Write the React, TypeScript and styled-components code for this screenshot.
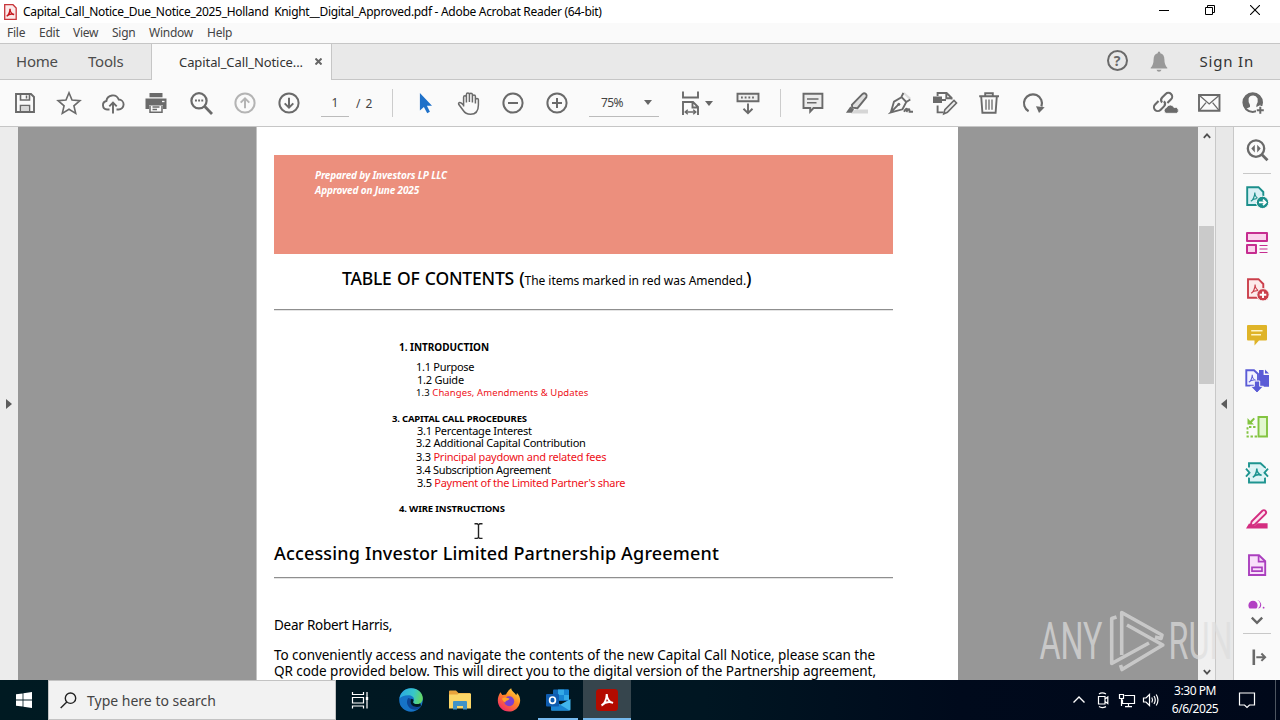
import React, { ReactNode } from 'react';
import styled, { createGlobalStyle, css } from 'styled-components';

const GlobalStyle = createGlobalStyle`
  * {
    box-sizing: border-box;
  }

  body {
    margin: 0;
    overflow: hidden;
    font-family: 'Noto Sans', 'Open Sans', sans-serif;
    color: #000000;
  }

  svg {
    display: block;
    flex: none;
  }
`;

// ---------------------------------------------
// icons
// ---------------------------------------------
const Glyph = styled.svg.attrs({ viewBox: '0 0 28 28' })<{
  $color?: string;
  $stroke?: number;
}>`
  width: 28px;
  height: 28px;
  fill: none;
  stroke: ${({ $color = '#6a6a6a' }) => $color};
  stroke-width: ${({ $stroke = 1.9 }) => $stroke};
  color: ${({ $color = '#6a6a6a' }) => $color};
`;

const acrobatMark =
  'M-4.2 4.2C-2.2 3.6 -.2 -.6 -.2 -4.6C-.2 -1.6 1.6 1.8 4.6 2.2C2 1.2 -1.6 1.8 -4.2 4.2';

const SaveIcon = () => (
  <Glyph>
    <path d="M5 5H20L23 8V23H5Z" />
    <path d="M9.5 5V11H18.5V5M9.5 23V16.5H18.5V23" strokeWidth="1.6" />
    <path d="M10.3 17.3H17.7V22H10.3Z" fill="#d8d8d8" stroke="none" />
    <path d="M15.5 6.5V9.5" strokeWidth="1.5" />
  </Glyph>
);

const StarIcon = () => (
  <Glyph $stroke={1.6}>
    <path d="M14 3.8L17 11.1L24.9 11.7L18.9 16.8L20.7 24.4L14 20.3L7.3 24.4L9.1 16.8L3.1 11.7L11 11.1Z" />
  </Glyph>
);

const CloudIcon = () => (
  <Glyph>
    <path d="M10.5 20.5H8A4.3 4.3 0 0 1 7.4 12A6.4 6.4 0 0 1 19.7 10.5A5 5 0 0 1 19.5 20.5H17.5" />
    <path d="M14 24.5V14M10.3 17.3L14 13.6L17.7 17.3" />
  </Glyph>
);

const PrintIcon = () => (
  <Glyph>
    <path d="M6.5 4H19.5V8.2H6.5ZM2.5 9.5H23.5V20H20V16.5H6V20H2.5Z" fill="currentColor" stroke="none" />
    <path d="M7 17V23.2H19V17M9.5 17.9H16.5M9.5 20.6H14" strokeWidth="1.5" />
    <path d="M19 12.5H21.5" stroke="#fafafa" strokeWidth="1.3" />
  </Glyph>
);

const SearchIcon = () => (
  <Glyph $stroke={2.2}>
    <circle cx="12" cy="11.8" r="7.6" />
    <path d="M17.8 17.6L25 25" strokeWidth="2.8" />
    <path d="M8 11.5H16.4" strokeDasharray="1.9 1.25" />
  </Glyph>
);

const PageArrowIcon = ({ up }: { up?: boolean }) => (
  <Glyph $color={up ? '#b4b4b4' : undefined} $stroke={2}>
    <circle cx="14" cy="14" r="9.6" />
    {up ? (
      <path d="M14 19.3V9.5M9.7 13.6L14 9.3L18.3 13.6" />
    ) : (
      <path d="M14 8.7V18.5M9.7 14.4L14 18.7L18.3 14.4" />
    )}
  </Glyph>
);

const PointerIcon = () => (
  <Glyph>
    <path d="M8.9 4V21.4L12.9 17.9L16.2 24.2L18.9 22.8L15.9 16.8H21Z" fill="#1f71c9" stroke="none" />
  </Glyph>
);

const HandIcon = () => (
  <Glyph $stroke={1.5}>
    <path d="M8.6 17.5V8.3Q8.6 6.7 10 6.7T11.4 8.3V13.5V5.6Q11.4 4 12.9 4T14.4 5.6V13V5.4Q14.4 4.2 15.9 4.2T17.4 5.8V13.5V7.3Q17.4 6 18.9 6T20.4 7.4V14.4V10.5Q20.6 9.4 22 9.4T23.4 10.8V16Q23.4 25.3 15.5 25.3Q10.6 25.3 7.9 21L3.7 15.3Q3.2 13.7 4.8 13.5Q6.2 13.3 8.6 16.3" />
  </Glyph>
);

const ZoomStepIcon = ({ plus }: { plus?: boolean }) => (
  <Glyph $stroke={2}>
    <circle cx="14" cy="14" r="9.6" />
    <path d={plus ? 'M9 14H19M14 9V19' : 'M9 14H19'} />
  </Glyph>
);

const FitIcon = () => (
  <Glyph>
    <path d="M6 2.5V8.5H21V2.5M6 26V13H16L21 18V26M15.5 13V18.5H21" />
    <path d="M8.5 23H18.5M10.8 20.8L8.2 23L10.8 25.2M16.2 20.8L18.8 23L16.2 25.2" strokeWidth="1.4" />
  </Glyph>
);

const ReadModeIcon = () => (
  <Glyph>
    <path d="M3.5 4.8H24.5V12.2H3.5Z" fill="#eeeeee" />
    <path d="M7 8.5H21.5" strokeDasharray="1.8 1.9" />
    <path d="M14 14.5V23.5M9.5 19.7L14 24.1L18.5 19.7" />
  </Glyph>
);

const CommentIcon = () => (
  <Glyph>
    <path d="M4.5 4.8H23.4V19H14.5L11.2 22.6V19H4.5Z" fill="#ececec" />
    <path d="M8 10H19.5M8 13.7H17.5" strokeWidth="1.4" />
  </Glyph>
);

const HighlightIcon = () => (
  <Glyph>
    <path d="M12 20.5H25V24.5H8Z" fill="#d6d6d6" stroke="none" />
    <path d="M19.6 4.9Q21.2 3.7 22.9 5Q24.4 6.5 23.4 8.2L14.5 19.2L9.3 18.6L8.9 15.9Z" fill="#dedede" strokeWidth="1.9" />
    <path d="M7.3 17.5L11 20.6L8.8 23.8H2.9Z" fill="currentColor" stroke="none" />
  </Glyph>
);

const SignIcon = () => (
  <Glyph $stroke={1.9}>
    <path d="M15.5 4L22.5 11L24 9L17.5 3.2Z" fill="#dddddd" stroke="none" />
    <path d="M3.8 23.4L7 12.6L14.6 8.2L19.3 13L15.5 20.3L3.8 23.4L11.3 15.7M14.2 8.4L16.4 4M19.3 13L23.3 10.5" />
    <circle cx="11.8" cy="15.2" r="1.5" fill="currentColor" stroke="none" />
    <path d="M17 22.7Q19.5 18.7 20 20.1T19.4 22.9Q22 19 22.3 20.5T22.6 22.7H26" />
  </Glyph>
);

const EditPageIcon = () => (
  <Glyph>
    <path d="M2 7.5H11V14H2Z" fill="currentColor" stroke="none" />
    <path d="M6.6 7V4H15.6L20.6 9V10.4M15.3 4V9.3H20.6M6.6 16.5V23.4H12.5M11 11H15" />
    <path d="M12.8 24.8L13.9 20.6L23 11.5L25.5 14L16.4 23.3Z" fill="#ececec" strokeWidth="1.6" />
  </Glyph>
);

const TrashIcon = () => (
  <Glyph>
    <path d="M4.2 7.2H24M10.2 7V4.3H17.8V7M6.2 7.5L7.4 23.7H20.6L21.8 7.5" />
    <path d="M11 10.5V20.8M14 10.5V20.8M17 10.5V20.8" strokeWidth="1.3" />
  </Glyph>
);

const RotateIcon = () => (
  <Glyph $stroke={2.2}>
    <path d="M9.6 22.2A9 9 0 1 1 22.4 17.5" />
    <path d="M17 17.3L25.7 18.2L20 24Z" fill="currentColor" stroke="none" />
  </Glyph>
);

const LinkIcon = () => (
  <Glyph $stroke={2.1}>
    <g transform="rotate(-45 12 13)">
      <path d="M9.5 9.2H4.6A3.8 3.8 0 0 0 4.6 16.8H9.6A3.8 3.8 0 0 0 13.2 13.2" />
      <path d="M14.4 16.8H19.6A3.8 3.8 0 0 0 19.6 9.2H14.6A3.8 3.8 0 0 0 11 12.7" />
    </g>
    <path d="M15 24.3A3 3 0 0 1 15.5 18.6A4 4 0 0 1 23 18.6A3 3 0 0 1 25.5 24.3Z" fill="currentColor" stroke="#fafafa" strokeWidth="0.8" />
  </Glyph>
);

const MailIcon = () => (
  <Glyph>
    <path d="M4 6H24.5V21.8H4Z" />
    <path d="M4.5 6.5L14.2 15L24 6.5M4.5 21.3L11 13.6M24 21.3L17.6 13.6" strokeWidth="1.3" />
  </Glyph>
);

const UserIcon = () => (
  <Glyph>
    <circle cx="13.7" cy="13.6" r="9.3" strokeWidth="2" />
    <path d="M4.7 17C3 7 10 4 14 4.2C20 4.5 24 9 23 15L17.4 18.3V16Q19.4 13 18.6 9.4Q17 6.4 14 6.6Q10.6 6.6 9.6 9.6Q9 13.3 11 16V18L6.5 20Z" fill="currentColor" stroke="none" />
    <path d="M17 21.3H25.6M21.3 17V25.6" stroke="#fafafa" strokeWidth="5" />
    <path d="M17.8 21.3H24.8M21.3 17.8V24.8" strokeWidth="2" />
  </Glyph>
);

const HelpMark = styled.span`
  display: flex;
  align-items: center;
  justify-content: center;
  width: 21px;
  height: 21px;
  border: 2px solid #6a6a6a;
  border-radius: 50%;
  color: #6a6a6a;
  font-size: 14px;
  font-weight: 700;
  line-height: 17px;
`;

const BellIcon = () => (
  <Glyph $color="#999999">
    <path d="M14 3.6Q15.4 3.6 15.3 5.2Q19.4 6.3 19.4 11.5Q19.4 17 22.3 19.7V20.6H5.7V19.7Q8.6 17 8.6 11.5Q8.6 6.3 12.7 5.2Q12.6 3.6 14 3.6ZM11.5 21.8H16.5Q16 23.7 14 23.7T11.5 21.8Z" fill="currentColor" stroke="none" />
  </Glyph>
);

const FindToolIcon = () => (
  <Glyph $stroke={2.3}>
    <circle cx="13" cy="12.6" r="8.2" />
    <path d="M18.8 18.6L24.5 24.2" strokeWidth="2.8" />
    <path d="M11.8 8.8V16.4L8.3 12.6ZM14.2 8.8V16.4L17.7 12.6Z" fill="currentColor" stroke="none" />
  </Glyph>
);

const ExportIcon = () => (
  <Glyph $color="#1b8f8b">
    <path d="M4.2 4.2H15.5L20.3 9V22H4.2Z" fill="#d8f0f5" />
    <path d={acrobatMark} transform="translate(12 14)" strokeWidth="1.1" />
    <circle cx="19.5" cy="19.4" r="6.2" fill="currentColor" stroke="#fafafa" strokeWidth="1" />
    <path d="M16 19.4H22.5M20 16.6L22.8 19.4L20 22.2" stroke="#ffffff" strokeWidth="1.7" />
  </Glyph>
);

const OrganizeIcon = () => (
  <Glyph $color="#c62d90" $stroke={2}>
    <path d="M4 4H24V12H4ZM4 16H13V24H4Z" fill="#fbd3ec" strokeLinejoin="round" />
    <path d="M16.5 16.5H24.5M16.5 20H24.5M16.5 23.5H24.5" strokeWidth="1.2" />
  </Glyph>
);

const CreateIcon = () => (
  <Glyph $color="#cb3f4b">
    <path d="M5 4.2H15.5L20.3 9V22.8H5Z" fill="#fdeaea" />
    <path d={acrobatMark} transform="translate(12.3 14)" strokeWidth="1.1" />
    <circle cx="20" cy="19.8" r="6.2" fill="currentColor" stroke="#fafafa" strokeWidth="1" />
    <path d="M16.7 19.8H23.3M20 16.5V23.1" stroke="#ffffff" strokeWidth="1.9" />
  </Glyph>
);

const NoteIcon = () => (
  <Glyph $color="#dfb428">
    <path d="M5 4H23Q24 4 24 5V18.6Q24 19.6 23 19.6H16L11.5 24.4V19.6H5Q4 19.6 4 18.6V5Q4 4 5 4Z" fill="currentColor" stroke="none" />
    <path d="M8.2 9.8H19.5M8.2 13.7H18" stroke="#fff4c4" strokeWidth="1.6" />
  </Glyph>
);

const CombineIcon = () => (
  <Glyph $color="#5a5bd6">
    <path d="M12 18.6H3.3V3.3H11L15 7V14" fill="#f2f2ff" />
    <path d={acrobatMark} transform="translate(9.4 11.6) scale(.85)" strokeWidth="1.2" />
    <path d="M16 3H20.6V8H26V19.7H16ZM22 2.6L26 6.6H22Z" fill="currentColor" stroke="none" />
    <path d="M11.3 14V19.3H7.6L14 26L20.4 19.3H16.7V14Z" fill="currentColor" stroke="#fafafa" strokeWidth="1" />
  </Glyph>
);

const CompareIcon = () => (
  <Glyph $color="#83c441">
    <path d="M15.5 4H24V23.5H15.5Z" fill="#e2f7cf" />
    <path d="M12.5 14H4.5V23.5H14" strokeDasharray="2.4 1.7" />
    <path d="M4.5 5V11.5H11L8.8 9.5L12 6L10.6 4.7L7.2 7.9Z" fill="currentColor" stroke="none" />
  </Glyph>
);

const CompressIcon = () => (
  <Glyph $color="#1e9490">
    <path d="M6 8.4V4.2H17.5L22 8.4V9.5M6 18.5V23.5H22V18.5" fill="#dcf3f5" />
    <path d="M6 9H22V18.5H6Z" fill="#dcf3f5" stroke="none" />
    <path d="M3 9.7L6.5 13.7L3 17.7M25 9.7L21.5 13.7L25 17.7" />
    <path d={acrobatMark} transform="translate(14 14)" strokeWidth="1.5" />
  </Glyph>
);

const RedactIcon = () => (
  <Glyph $color="#d42d80">
    <path d="M3 23.6L6 18.6L12 20.5L14.5 18.2H24.6V23.6Z" fill="currentColor" stroke="none" />
    <path d="M7.6 20.6L8.6 16.6L19.6 5.6Q21 4.6 22.4 5.8Q23.8 7.2 22.6 8.8L11.6 19.7Z" fill="#fde4f0" />
  </Glyph>
);

const FormIcon = () => (
  <Glyph $color="#aa3fbe">
    <path d="M6 4.2H16L22.2 10.2V24H6Z" fill="#f8e0fa" />
    <path d="M15.6 4.5V10.6H22M9 16.3H19V20.2H9Z" strokeWidth="1.7" />
  </Glyph>
);

const ShareIcon = () => (
  <svg width="20" height="10" viewBox="0 0 20 10">
    <path d="M2.6 9.5A4.6 4.6 0 1 1 9.4 9.5ZM9.5 .9A4.6 4.6 0 0 1 10.8 9.4L13 9.1A5 5 0 0 0 9.5 .9Z" fill="#b23fc3" />
    <circle cx="16.6" cy="8.7" r="0.9" fill="#b23fc3" />
  </svg>
);

const ChevronDown = () => (
  <svg width="14" height="9" viewBox="0 0 14 9" fill="none" stroke="#666666" strokeWidth="2.3">
    <path d="M1.8 1.6L7 6.8L12.2 1.6" />
  </svg>
);

const CollapseIcon = () => (
  <Glyph $stroke={2.6}>
    <path d="M10.8 6.5V22" />
    <path d="M13.3 14.2H21.8M18.4 10.5L22.1 14.2L18.4 17.9" strokeWidth="2" />
  </Glyph>
);

// ---------------------------------------------
// window chrome
// ---------------------------------------------
const Screen = styled.div`
  position: relative;
  display: flex;
  flex-direction: column;
  width: 1280px;
  height: 720px;
  overflow: hidden;
`;

const TitleBar = styled.header`
  display: flex;
  align-items: center;
  height: 23px;
  padding: 0 2px 0 4px;
  background: #ffffff;

  h1 {
    flex: 1;
    margin: 0 0 0 4px;
    font-size: 12px;
    font-weight: 400;
    letter-spacing: -0.3px;
    white-space: pre;
  }
`;

const WindowButton = styled.span`
  display: flex;
  justify-content: center;
  width: 45.5px;
  padding-bottom: 3px;
`;

const MenuBar = styled.nav`
  display: flex;
  gap: 14px;
  height: 20px;
  padding: 1px 7px 0;
  background: #fafafa;
  font-size: 12px;
  line-height: 18px;
  color: #444444;
`;

const MenuItem = styled.span<{ $width: number }>`
  width: ${({ $width }) => $width}px;
  letter-spacing: -0.25px;
  white-space: nowrap;
`;

const TabBar = styled.div`
  display: flex;
  align-items: center;
  height: 37px;
  background: #e9e9e9;
  border-top: 1px solid #c6c6c6;
  border-bottom: 1px solid #c6c6c6;
  color: #4c4c4c;
  font-size: 15px;
`;

const TabLink = styled.span<{ $width: number }>`
  width: ${({ $width }) => $width}px;
  padding: 0 0 2px 16px;
  letter-spacing: -0.2px;
`;

const ActiveTab = styled.div`
  display: flex;
  align-items: center;
  width: 181px;
  height: 37px;
  margin-bottom: -2px;
  padding: 0 9px 2px 27px;
  justify-content: space-between;
  background: #fafafa;
  border-left: 1px solid #c6c6c6;
  border-right: 1px solid #c6c6c6;
  color: #333333;
  font-size: 13px;
  letter-spacing: -0.08px;
`;

const Account = styled.div`
  display: flex;
  align-items: center;
  margin-left: auto;
  padding: 0 26px 2px 0;
  color: #333333;

  svg {
    margin: 2px 27px 0 17px;
  }

  b {
    font-weight: 400;
    letter-spacing: 0.8px;
  }
`;

const Toolbar = styled.div`
  display: flex;
  align-items: center;
  height: 47px;
  padding: 0 5px 0 3px;
  background: #fafafa;
  border-bottom: 1px solid #c6c6c6;
  font-size: 12px;
  color: #444444;
`;

const Tool = styled.span`
  display: flex;
  justify-content: center;
  flex: none;
  width: 44px;
`;

const Divider = styled.i<{ $before?: number; $after: number }>`
  flex: none;
  width: 1px;
  height: 28px;
  margin: 0 ${({ $after }) => $after}px 0 ${({ $before = 0 }) => $before}px;
  background: #cccccc;
`;

const PageField = styled.span`
  display: flex;
  align-items: center;
  justify-content: center;
  width: 28px;
  height: 27px;
  border-bottom: 1px solid #bbbbbb;
`;

const ZoomField = styled.div`
  display: flex;
  align-items: center;
  justify-content: space-between;
  flex: none;
  width: 70px;
  height: 27px;
  margin-left: 10px;
  padding: 0 7px 0 12px;
  border-bottom: 1px solid #bbbbbb;
  letter-spacing: -0.6px;
`;

const PageInput = styled.div`
  display: flex;
  align-items: center;
  gap: 7px;
  width: 71px;
  margin-left: 10px;
  word-spacing: 2px;
  white-space: nowrap;
`;

const Caret = styled.i`
  width: 0;
  height: 0;
  border: 4px solid transparent;
  border-top: 5px solid #666666;
  border-bottom: 0;
`;

const FitTool = styled.div`
  display: flex;
  align-items: center;
  width: 45px;
  margin: 0 4px 0 18px;
`;

const RightTools = styled.div`
  display: flex;
  margin-left: auto;
`;

// ---------------------------------------------
// document view
// ---------------------------------------------
const Workspace = styled.main`
  display: flex;
  height: 553px;
`;

const Strip = styled.div<{ $right?: boolean }>`
  display: flex;
  align-items: center;
  justify-content: center;
  width: 18px;
  background: #ececec;

  ${({ $right }) =>
    $right &&
    css`
      width: 19px;
      padding-right: 2px;
      border-left: 1px solid #c8c8c8;
      border-right: 1px solid #c8c8c8;
      background: #e8e8e8;
    `}
`;

const SideArrow = styled.i<{ $left?: boolean }>`
  width: 0;
  height: 0;
  border: 5px solid transparent;
  border-${({ $left }) => ($left ? 'right' : 'left')}: 6px solid #5c5c5c;
  border-${({ $left }) => ($left ? 'left' : 'right')}: 0;
`;

const Canvas = styled.div`
  flex: 1;
  padding-left: 238px;
  background: #979797;
`;

const Page = styled.article`
  width: 702px;
  height: 553px;
  overflow: hidden;
  padding: 28px 65px 0 17px;
  background: #ffffff;
  border-left: 1px solid #c4c4c4;
`;

const Banner = styled.div`
  height: 99px;
  padding: 13px 41px;
  background: #ec8f7d;
  color: #ffffff;
  font-size: 10px;
  font-weight: 700;
  font-style: italic;
  line-height: 15px;
  letter-spacing: -0.15px;
`;

const ContentsTitle = styled.h2`
  height: 55px;
  margin: 0;
  padding: 11px 0 0 68px;
  font-size: 17.5px;
  font-weight: 500;
  line-height: 26px;
  letter-spacing: -0.2px;
  word-spacing: 1px;
  white-space: nowrap;

  small {
    font-size: 12px;
    font-weight: 400;
    letter-spacing: -0.05px;
    word-spacing: 0;
  }
`;

const Rule = styled.div`
  height: 2px;
  border-top: 1px solid #8f8f8f;
  background: #e4e4e4;
`;

const Contents = styled.div`
  height: 231px;
  padding-top: 30px;
`;

const Entry = styled.div<{
  $indent: number;
  $height?: number;
  $spacing?: number;
  $heading?: boolean;
  $size?: number;
}>`
  height: ${({ $height = 13 }) => $height}px;
  padding-left: ${({ $indent }) => $indent}px;
  font-size: ${({ $size = 11 }) => $size}px;
  font-weight: ${({ $heading }) => ($heading ? 700 : 400)};
  line-height: 12px;
  letter-spacing: ${({ $spacing = -0.24 }) => $spacing}px;
  white-space: nowrap;

  em {
    color: #ee1018;
    font-style: normal;
  }
`;

const SectionTitle = styled.h2`
  height: 35px;
  margin: 0;
  font-size: 18px;
  font-weight: 500;
  line-height: 22px;
  letter-spacing: 0.16px;
  white-space: nowrap;
`;

const Letter = styled.div`
  padding-top: 38px;
  font-size: 13.5px;
  line-height: 16px;
  letter-spacing: -0.05px;
  white-space: nowrap;

  p {
    margin: 0 0 14px;
  }

  p:first-child {
    letter-spacing: -0.25px;
  }
`;

const Scrollbar = styled.div`
  display: flex;
  flex-direction: column;
  align-items: center;
  justify-content: space-between;
  width: 17px;
  padding: 5px 0 4px;
  background: #f0f0f0;
`;

const Thumb = styled.div`
  width: 15px;
  height: 158px;
  margin-bottom: 198px;
  background: #cacaca;
`;

const ToolPane = styled.aside`
  display: flex;
  flex-direction: column;
  align-items: center;
  width: 46px;
  background: #fafafa;
`;

const PaneItem = styled.span`
  display: flex;
  align-items: center;
  height: 46px;
`;

const PaneRule = styled.i`
  width: 28px;
  height: 1px;
  background: #c8c8c8;
`;

const MorePane = styled.div`
  display: flex;
  flex-direction: column;
  align-items: center;
  gap: 7px;
  height: 45px;
  padding-top: 11px;
`;

const Watermark = styled.svg`
  position: absolute;
  left: 1036px;
  top: 604px;
  fill: #dedede;
  opacity: 0.7;
  font-family: 'Roboto', sans-serif;
  font-size: 51px;
  font-weight: 400;
`;

const TextCursor = styled.svg`
  position: absolute;
  left: 474px;
  top: 523px;
`;

// ---------------------------------------------
// taskbar
// ---------------------------------------------
const Taskbar = styled.footer`
  display: flex;
  height: 40px;
  background: linear-gradient(90deg, #001a22 0%, #001622 55%, #000a1c 75%, #00081a 100%);
  color: #ffffff;
`;

const TaskButton = styled.span<{ $width: number; $active?: boolean; $open?: boolean }>`
  display: flex;
  align-items: center;
  justify-content: center;
  width: ${({ $width }) => $width}px;
  margin: ${({ $open }) => ($open ? '0 5px 0 4px' : '0')};
  background: ${({ $active }) => ($active ? '#36454d' : 'transparent')};
  box-shadow: ${({ $active, $open }) => ($active || $open ? 'inset 0 -2px #76b9ed' : 'none')};
`;

const SearchBox = styled.div`
  display: flex;
  align-items: center;
  gap: 10px;
  width: 288px;
  padding: 0 11px;
  background: #f2f2f2;
  border: 1px solid #c3c3c3;
  color: #444444;
  font-size: 14px;
`;

const Tray = styled.div`
  display: flex;
  align-items: center;
  margin-left: auto;
`;

const TrayIcon = styled.svg.attrs({ viewBox: '0 0 24 24' })`
  width: 24px;
  height: 24px;
  fill: none;
  stroke: #ffffff;
  stroke-width: 1.2;
`;

const Clock = styled.div`
  width: 64px;
  margin-right: 8px;
  font-size: 12px;
  line-height: 18px;
  letter-spacing: -0.45px;
  text-align: center;
`;

const PeekEdge = styled.i`
  width: 5px;
  height: 40px;
  margin-left: 16px;
  border-left: 1px solid #4d5560;
`;

const menu: [string, number][] = [
  ['File', 18],
  ['Edit', 20],
  ['View', 25],
  ['Sign', 23],
  ['Window', 44],
  ['Help', 24],
];

function ToolGroup({ children }: { children: ReactNode }) {
  return (
    <>
      {React.Children.map(children, (icon) => (
        <Tool>{icon}</Tool>
      ))}
    </>
  );
}

function WindowHeader() {
  return (
    <>
      <TitleBar>
        <svg width="15" height="16" viewBox="0 0 15 16">
          <path d="M.7 .7H9L12.2 4V15.3H.7Z" fill="#fbeaea" stroke="#c7353a" strokeWidth="1.3" />
          <path d={acrobatMark} transform="translate(6.2 8.6) scale(.85)" fill="none" stroke="#c4161c" strokeWidth="1.7" />
        </svg>
        <h1>
          Capital_Call_Notice_Due_Notice_2025_Holland{'  '}Knight__Digital_Approved.pdf - Adobe Acrobat Reader (64-bit)
        </h1>
        <WindowButton>
          <svg width="10" height="10" viewBox="0 0 10 10">
            <path d="M0 5.5H10" stroke="#000" />
          </svg>
        </WindowButton>
        <WindowButton>
          <svg width="10" height="10" viewBox="0 0 10 10" fill="none" stroke="#000">
            <path d="M.5 2.5H7.5V9.5H.5ZM2.5 2.5V.5H9.5V7.5H7.5" />
          </svg>
        </WindowButton>
        <WindowButton>
          <svg width="10" height="10" viewBox="0 0 10 10" stroke="#000" strokeWidth="1.1">
            <path d="M0 0L10 10M10 0L0 10" />
          </svg>
        </WindowButton>
      </TitleBar>

      <MenuBar>
        {menu.map(([label, width]) => (
          <MenuItem key={label} $width={width}>
            {label}
          </MenuItem>
        ))}
      </MenuBar>

      <TabBar>
        <TabLink $width={72}>Home</TabLink>
        <TabLink $width={79}>Tools</TabLink>
        <ActiveTab>
          Capital_Call_Notice...
          <svg width="7" height="7" viewBox="0 0 7 7" stroke="#666" strokeWidth="2">
            <path d="M.5 .5L6.5 6.5M6.5 .5L.5 6.5" />
          </svg>
        </ActiveTab>
        <Account>
          <HelpMark>?</HelpMark>
          <BellIcon />
          <b>Sign In</b>
        </Account>
      </TabBar>

      <Toolbar>
        <ToolGroup>
          <SaveIcon />
          <StarIcon />
          <CloudIcon />
          <PrintIcon />
          <SearchIcon />
          <PageArrowIcon up />
          <PageArrowIcon />
        </ToolGroup>
        <PageInput>
          <PageField>1</PageField>
          <span>/ 2</span>
        </PageInput>
        <Divider $after={10} />
        <ToolGroup>
          <PointerIcon />
          <HandIcon />
          <ZoomStepIcon />
          <ZoomStepIcon plus />
        </ToolGroup>
        <ZoomField>
          75%
          <Caret />
        </ZoomField>
        <FitTool>
          <FitIcon />
          <Caret />
        </FitTool>
        <Tool>
          <ReadModeIcon />
        </Tool>
        <Divider $before={10} $after={10} />
        <ToolGroup>
          <CommentIcon />
          <HighlightIcon />
          <SignIcon />
          <EditPageIcon />
          <TrashIcon />
          <RotateIcon />
        </ToolGroup>
        <RightTools>
          <ToolGroup>
            <LinkIcon />
            <MailIcon />
            <UserIcon />
          </ToolGroup>
        </RightTools>
      </Toolbar>
    </>
  );
}

function DocumentPage() {
  return (
    <Page>
      <Banner>
        Prepared by Investors LP LLC
        <br />
        Approved on June 2025
      </Banner>
      <ContentsTitle>
        TABLE OF CONTENTS (<small>The items marked in red was Amended.</small>)
      </ContentsTitle>
      <Rule />
      <Contents>
        <Entry $indent={125} $height={20} $heading $size={10} $spacing={-0.02}>
          1. INTRODUCTION
        </Entry>
        <Entry $indent={142} $spacing={-0.28}>1.1 Purpose</Entry>
        <Entry $indent={143}>1.2 Guide</Entry>
        <Entry $indent={142} $height={26} $size={9.5} $spacing={0.1}>
          1.3 <em>Changes, Amendments &amp; Updates</em>
        </Entry>
        <Entry $indent={118} $height={12} $heading $size={9.5} $spacing={-0.19}>
          3. CAPITAL CALL PROCEDURES
        </Entry>
        <Entry $indent={143} $height={12}>3.1 Percentage Interest</Entry>
        <Entry $indent={142} $height={14}>3.2 Additional Capital Contribution</Entry>
        <Entry $indent={142}>
          3.3 <em>Principal paydown and related fees</em>
        </Entry>
        <Entry $indent={142} $spacing={-0.34}>3.4 Subscription Agreement</Entry>
        <Entry $indent={143} $height={26} $spacing={-0.28}>
          3.5 <em>Payment of the Limited Partner's share</em>
        </Entry>
        <Entry $indent={125} $heading $size={9.5} $spacing={-0.15}>
          4. WIRE INSTRUCTIONS
        </Entry>
      </Contents>
      <SectionTitle>Accessing Investor Limited Partnership Agreement</SectionTitle>
      <Rule />
      <Letter>
        <p>Dear Robert Harris,</p>
        <p>
          To conveniently access and navigate the contents of the new Capital Call Notice, please scan the
          <br />
          QR code provided below. This will direct you to the digital version of the Partnership agreement,
        </p>
      </Letter>
    </Page>
  );
}

function SidePane() {
  return (
    <ToolPane>
      <PaneItem>
        <FindToolIcon />
      </PaneItem>
      <PaneRule />
      {[
        ExportIcon,
        OrganizeIcon,
        CreateIcon,
        NoteIcon,
        CombineIcon,
        CompareIcon,
        CompressIcon,
        RedactIcon,
        FormIcon,
      ].map((Icon, i) => (
        <PaneItem key={i}>
          <Icon />
        </PaneItem>
      ))}
      <MorePane>
        <ShareIcon />
        <ChevronDown />
      </MorePane>
      <PaneRule />
      <PaneItem>
        <CollapseIcon />
      </PaneItem>
    </ToolPane>
  );
}

function WindowsTaskbar() {
  return (
    <Taskbar>
      <TaskButton $width={48}>
        <svg width="16" height="16" viewBox="0 0 16 16" fill="#fff">
          <path d="M0 2.3L6.6 1.4V7.5H0ZM7.4 1.3L16 0V7.5H7.4ZM0 8.4H6.6V14.6L0 13.7ZM7.4 8.4H16V16L7.4 14.7Z" />
        </svg>
      </TaskButton>
      <SearchBox>
        <svg width="17" height="17" viewBox="0 0 17 17" fill="none" stroke="#222" strokeWidth="1.4">
          <circle cx="10.5" cy="6.2" r="5.2" />
          <path d="M6.8 9.9L.7 16" />
        </svg>
        Type here to search
      </SearchBox>
      <TaskButton $width={48}>
        <svg width="18" height="18" viewBox="0 0 18 18" fill="none" stroke="#fff" strokeWidth="1.2">
          <path d="M1.5 1V3.5H12.5V1M1.5 6.5H12.5V12H1.5ZM1.5 17.5V15H12.5V17.5M16 1V17.5" />
          <path d="M14.8 6H17.2V9H14.8Z" fill="#fff" stroke="none" />
        </svg>
      </TaskButton>
      <TaskButton $width={53}>
        <svg width="24" height="24" viewBox="0 0 24 24">
          <defs>
            <linearGradient id="edge" x1="0" y1="0.2" x2="1" y2="0.4">
              <stop offset="0" stopColor="#2aa7e2" />
              <stop offset="0.6" stopColor="#37c6c9" />
              <stop offset="1" stopColor="#64d763" />
            </linearGradient>
          </defs>
          <circle cx="12" cy="12" r="11.8" fill="#1673c7" />
          <path d="M.5 10.5C1.5 4 6.4 .2 12 .2C19 .2 23.8 5 23.8 10.2C23.8 14 21 16.3 17.8 16.3C15.6 16.3 14 15.4 14 14.3C14 13.5 15 13.2 15 11.4C15 9 12.6 7.2 9.4 7.2C5 7.2 1.8 8.6 .5 10.5Z" fill="url(#edge)" />
          <path d="M9.2 10C6.6 13.6 8.2 19.4 13.3 21.3C17 22.4 20.3 21 22 18.5C19.5 19.7 14.5 19.4 12.3 16.5C11 14.5 11.4 12 12.4 11Z" fill="#0c4595" />
          <path d="M12.4 10.8C15 11 14.7 12.7 14.1 14C14 16 18 16.8 21.4 15.2L22 18.2C18 19.8 13.3 18.7 12 16C11 13.8 11.6 12 12.4 10.8Z" fill="#001824" />
        </svg>
      </TaskButton>
      <TaskButton $width={46}>
        <svg width="22" height="20" viewBox="0 0 22 20">
          <path d="M0 1.5Q0 .5 1 .5H7L9.5 3H21V8H0Z" fill="#e8a33c" />
          <path d="M0 4.6H8.4L10 3.5H22V18.5H0Z" fill="#fbd667" />
          <path d="M4 19.5V12Q4 11 5 11H17Q18 11 18 12V19.5H14V16H8V19.5Z" fill="#3f93c7" />
        </svg>
      </TaskButton>
      <TaskButton $width={51}>
        <svg width="24" height="24" viewBox="0 0 24 24">
          <defs>
            <linearGradient id="fox" x1="0.9" y1="0" x2="0.2" y2="1">
              <stop offset="0" stopColor="#ffe14a" />
              <stop offset="0.45" stopColor="#ff8a22" />
              <stop offset="1" stopColor="#f0246d" />
            </linearGradient>
          </defs>
          <path d="M3.4 4.2L5.3 7L9 6.5C10.5 3.8 12.2 1.4 14.2 .2C14.5 3.2 17.5 4 19.3 7.2L20 5C22.8 8 23.5 11 23 14C22 19.8 17.6 23.6 12 23.6C5.6 23.6 .8 18.7 .8 12.6C.8 9.5 1.8 6.6 3.4 4.2Z" fill="url(#fox)" />
          <circle cx="12.2" cy="13.2" r="5" fill="#7b3fd0" />
          <path d="M5 10.5C7.5 8.6 10 9.4 12.8 10.8C11.2 12.8 9 12 8.2 14.5C6.5 13.6 5.2 12.3 5 10.5Z" fill="#ffa32a" />
        </svg>
      </TaskButton>
      <TaskButton $width={40} $open>
        <svg width="25" height="22" viewBox="0 0 25 22">
          <path d="M7 1.5Q7 .5 8 .5H22Q23 .5 23 1.5V12H7Z" fill="#1066b5" />
          <path d="M12 .5H18V6H12ZM18 6H23V11H18Z" fill="#32a9e7" />
          <path d="M18 .5H22Q23 .5 23 1.5V6H18ZM12 6H18V11H12Z" fill="#1684d3" />
          <path d="M5 10L14.5 15.5L24.5 10V20.5Q24.5 21.5 23.5 21.5H6Q5 21.5 5 20.5Z" fill="#41b5ee" />
          <path d="M5 10V20.5Q5 21.5 6 21.5H23.5Z" fill="#1a84d4" />
          <rect x="0" y="5" width="13" height="12.5" rx="1" fill="#0e5cb0" />
          <ellipse cx="6.5" cy="11.2" rx="2.9" ry="3.2" fill="none" stroke="#fff" strokeWidth="1.7" />
        </svg>
      </TaskButton>
      <TaskButton $width={48} $active>
        <svg width="22" height="22" viewBox="0 0 22 22">
          <rect width="22" height="22" rx="3.5" fill="#b30b00" />
          <path d={acrobatMark} transform="translate(11 11) scale(1.3)" fill="none" stroke="#fff" strokeWidth="1.5" />
        </svg>
      </TaskButton>
      <Tray>
        <TrayIcon>
          <path d="M6.5 14.5L12 9L17.5 14.5" strokeWidth="1.4" />
        </TrayIcon>
        <TrayIcon>
          <path d="M7.5 8.5H14V16H7.5ZM14 11L16.8 9V15.5L14 13.5M8 6Q11 3.8 15 6M8 18.6Q11 20.6 15 18.6" />
        </TrayIcon>
        <TrayIcon>
          <path d="M9.5 7.5H19.5V15.5H7.5V11.5M13.5 15.5V18.5M10 18.6H17M4.5 6.5H8.5V10.5H4.5ZM6.5 10.5V18" />
        </TrayIcon>
        <TrayIcon>
          <path d="M4.5 10H7L10.5 6.5V17.5L7 14H4.5ZM12.8 9.5Q14.3 12 12.8 14.5M15 8Q17.5 12 15 16M17.2 6.5Q20.7 12 17.2 17.5" />
        </TrayIcon>
        <Clock>
          3:30 PM
          <br />
          6/6/2025
        </Clock>
        <TrayIcon>
          <path d="M4.5 5H19.5V17H14.5L12 19.5L9.5 17H4.5Z" />
        </TrayIcon>
        <PeekEdge />
      </Tray>
    </Taskbar>
  );
}

export default function App() {
  return (
    <Screen>
      <GlobalStyle />
      <WindowHeader />
      <Workspace>
        <Strip>
          <SideArrow />
        </Strip>
        <Canvas>
          <DocumentPage />
        </Canvas>
        <Scrollbar>
          <svg width="8" height="8" viewBox="0 0 8 8" fill="none" stroke="#505050" strokeWidth="1.8">
            <path d="M.8 5.8L4 2.4L7.2 5.8" />
          </svg>
          <Thumb />
          <svg width="8" height="8" viewBox="0 0 8 8" fill="none" stroke="#505050" strokeWidth="1.8">
            <path d="M.8 2.2L4 5.6L7.2 2.2" />
          </svg>
        </Scrollbar>
        <Strip $right>
          <SideArrow $left />
        </Strip>
        <SidePane />
      </Workspace>
      <WindowsTaskbar />
      <TextCursor width="9" height="17" viewBox="0 0 9 17" fill="none" stroke="#222" strokeWidth="1.4">
        <path d="M.5 .8H3.2L4.5 1.8L5.8 .8H8.5M4.5 1.8V14.4M.5 15.4H3.2L4.5 14.4L5.8 15.4H8.5" />
      </TextCursor>
      <Watermark width="200" height="70" viewBox="0 0 200 70">
        <text x="3.5" y="55" textLength="63" lengthAdjust="spacingAndGlyphs">ANY</text>
        <text x="132.5" y="55" textLength="64" lengthAdjust="spacingAndGlyphs">RUN</text>
        <path
          d="M85.7 51V8.5L126 31L125 34.5L119 33M80.5 13L75.7 14.5V59.5L113 39M91 21L126.8 41L86 65.5L84.5 61"
          fill="none"
          stroke="#dedede"
          strokeWidth="3.6"
          strokeLinejoin="round"
        />
      </Watermark>
    </Screen>
  );
}
